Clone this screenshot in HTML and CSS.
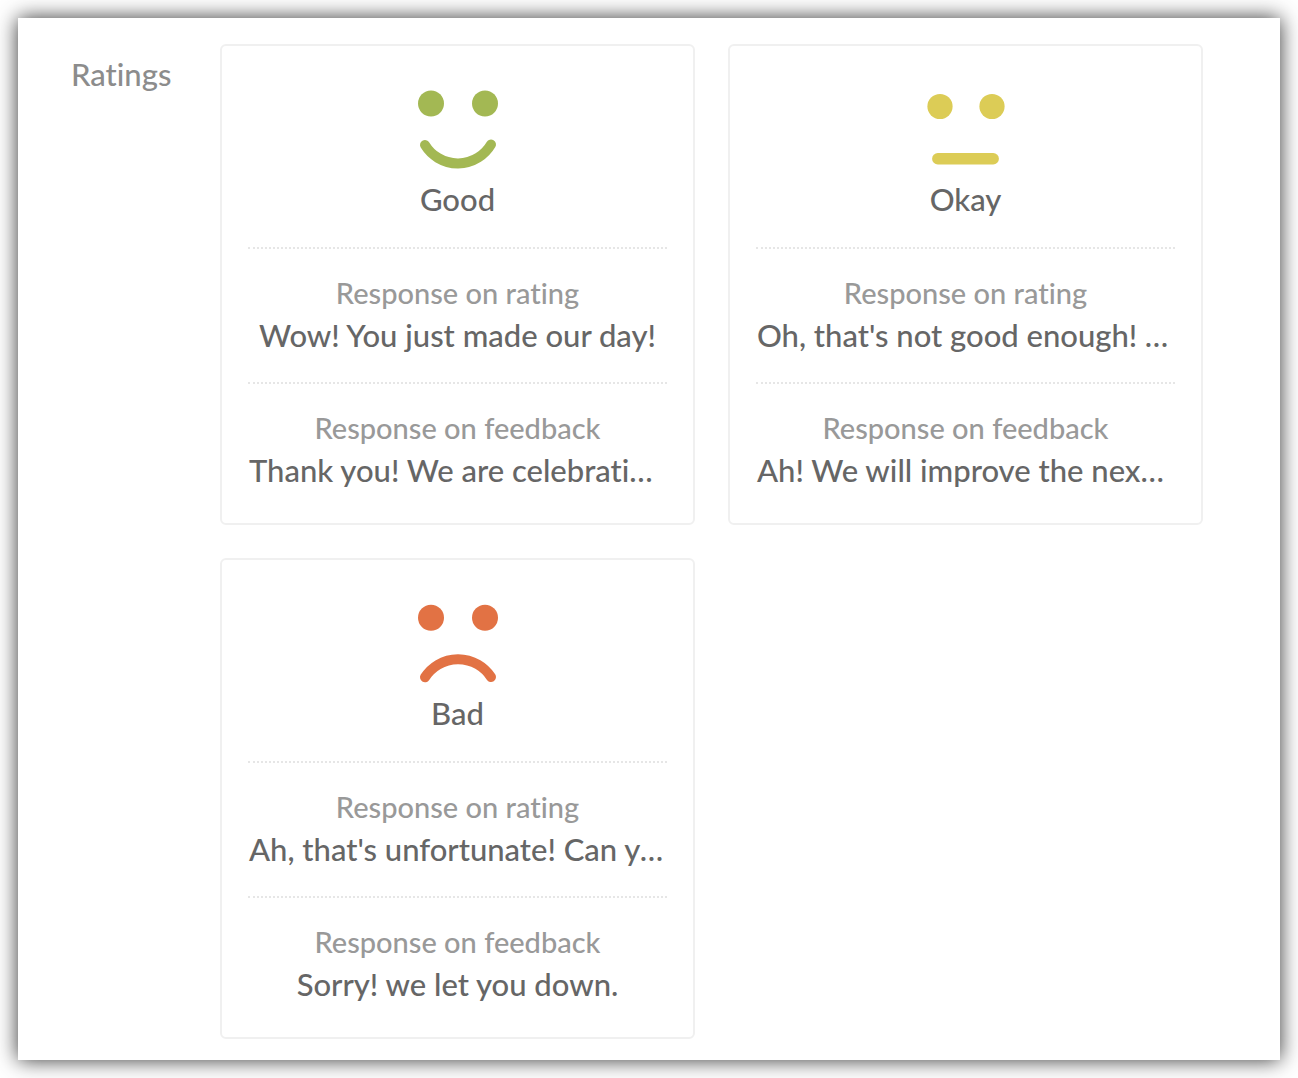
FILE: index.html
```html
<!DOCTYPE html>
<html lang="en">
<head>
<meta charset="utf-8">
<meta name="viewport" content="width=device-width, initial-scale=1">
<title>Ratings</title>
<link rel="stylesheet" href="styles.css">
</head>
<body>
<main class="panel">
  <h1 class="panel-title">Ratings</h1>
  <div class="ratings">
    <article class="card">
      <header class="card-head">
        <svg class="face face-good" viewBox="0 0 84 84" aria-hidden="true">
          <circle cx="15" cy="15.5" r="13"/><circle cx="69" cy="15.5" r="13"/>
          <path d="M9 57A38.5 38.5 0 0 0 75 56.5" stroke-width="10"/>
        </svg>
        <h2 class="name">Good</h2>
      </header>
      <section class="response">
        <h3 class="label">Response on rating</h3>
        <p class="value">Wow! You just made our day!</p>
      </section>
      <section class="response">
        <h3 class="label">Response on feedback</h3>
        <p class="value">Thank you! We are celebrating your feedback.</p>
      </section>
    </article>
    <article class="card">
      <header class="card-head">
        <svg class="face face-okay" viewBox="0 0 84 84" aria-hidden="true">
          <circle cx="16" cy="18.5" r="12.6"/><circle cx="68" cy="18.5" r="12.6"/>
          <path d="M13.8 70.8H69.2" stroke-width="11.4"/>
        </svg>
        <h2 class="name">Okay</h2>
      </header>
      <section class="response">
        <h3 class="label">Response on rating</h3>
        <p class="value">Oh, that's not good enough! What went wrong?</p>
      </section>
      <section class="response">
        <h3 class="label">Response on feedback</h3>
        <p class="value">Ah! We will improve the next time.</p>
      </section>
    </article>
    <article class="card">
      <header class="card-head">
        <svg class="face face-bad" viewBox="0 0 84 84" aria-hidden="true">
          <circle cx="15" cy="15.7" r="13"/><circle cx="69" cy="15.7" r="13"/>
          <path d="M9 75.3A39.3 39.3 0 0 1 75 75" stroke-width="10"/>
        </svg>
        <h2 class="name">Bad</h2>
      </header>
      <section class="response">
        <h3 class="label">Response on rating</h3>
        <p class="value">Ah, that's unfortunate! Can you tell us why?</p>
      </section>
      <section class="response">
        <h3 class="label">Response on feedback</h3>
        <p class="value">Sorry! we let you down.</p>
      </section>
    </article>
  </div>
</main>
</body>
</html>
```
FILE: styles.css
```css
* {
  box-sizing: border-box;
}

body {
  margin: 0;
  padding: 18px;
  background: #fff;
  color: #666;
  font: 500 31px/43px Lato, sans-serif;
  font-variant-ligatures: none;
}

h1,
h2,
h3,
p {
  margin: 0;
  font-size: inherit;
  font-weight: inherit;
}

.panel {
  display: grid;
  grid-template-columns: 149px minmax(0, 1fr);
  padding: 26px 77px 21px 53px;
  background: #fff;
  box-shadow: 0 0 20px rgba(0, 0, 0, 0.8);
}

.panel-title {
  padding-top: 9px;
  color: #8c8c8c;
}

.ratings {
  display: grid;
  grid-template-columns: repeat(2, minmax(0, 1fr));
  gap: 33px;
}

.card {
  padding: 42px 26px 6px;
  border: 2px solid #f0f0f0;
  border-radius: 6px;
  text-align: center;
}

.card-head {
  padding-bottom: 26px;
}

.face {
  display: block;
  width: 84px;
  height: 84px;
  margin: 0 auto 6px;
  fill: currentColor;
}

.face path {
  fill: none;
  stroke: currentColor;
  stroke-linecap: round;
}

.face-good {
  color: #a3b853;
}

.face-okay {
  color: #dccc56;
}

.face-bad {
  color: #e27244;
}

.response {
  padding: 22px 0 25px;
  border-top: 2px dotted #e6e6e6;
}

.label {
  color: #999;
  font-size: 29px;
}

.value {
  padding: 0 1px;
  overflow: hidden;
  text-overflow: ellipsis;
  white-space: nowrap;
}
```
